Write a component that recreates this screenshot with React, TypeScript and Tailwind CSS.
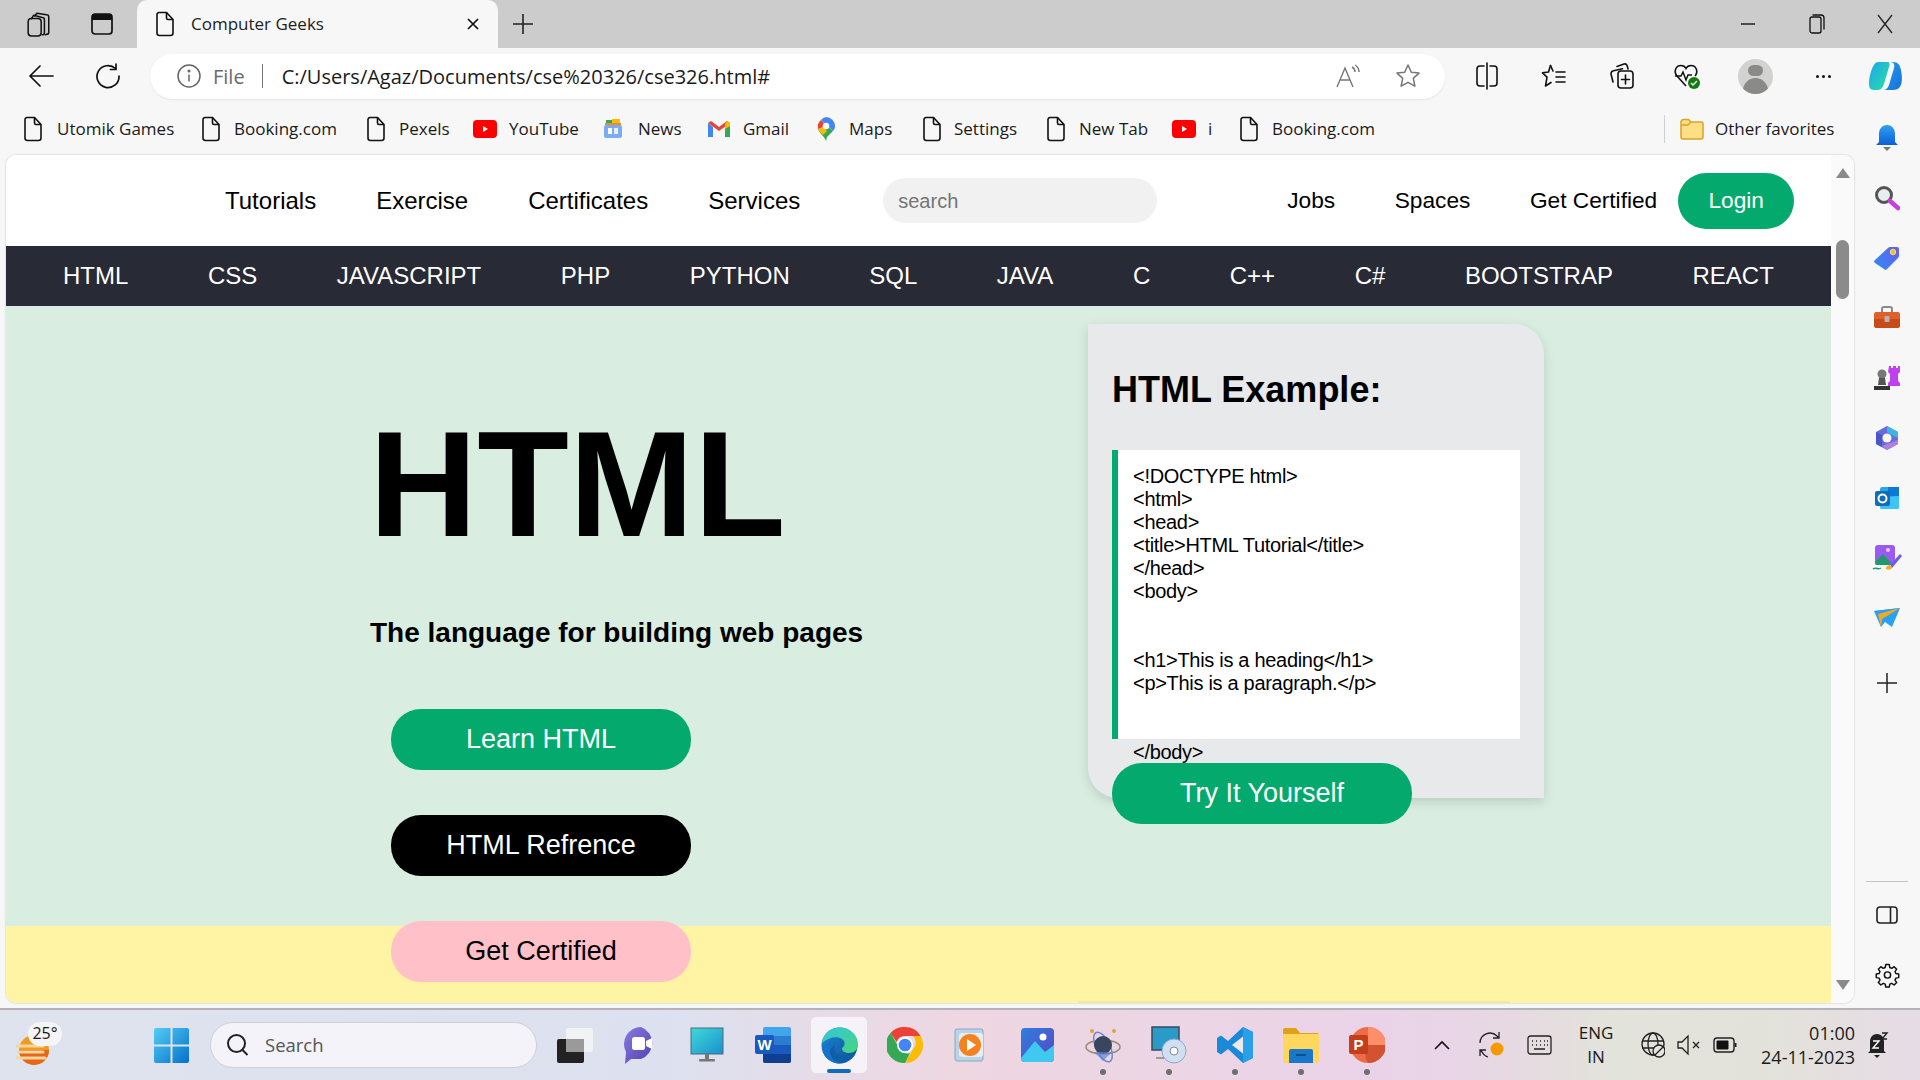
import React from "react";

const ui = "font-['Open_Sans',sans-serif]";
const web = "font-['Liberation_Sans',Arial,sans-serif]";

const Doc = ({ className = "" }: { className?: string }) => (
  <svg width="20" height="26" viewBox="0 0 20 26" fill="none" stroke="#111" strokeWidth="1.6" strokeLinejoin="round" className={className}>
    <path d="M4 1.5h7.5L18 8.5V22a2.5 2.5 0 0 1-2.5 2.5h-11A2.5 2.5 0 0 1 2 22V3.5a2 2 0 0 1 2-2z" />
    <path d="M11.5 1.5V7a1.5 1.5 0 0 0 1.5 1.5h5" />
  </svg>
);

const YouTube = () => (
  <svg width="24" height="20" viewBox="0 0 24 20">
    <rect x="0" y="1" width="24" height="18" rx="4" fill="#f00" />
    <path d="M10 7l5 3-5 3z" fill="#fff" />
  </svg>
);

const News = () => (
  <svg width="20" height="24" viewBox="0 0 20 24">
    <path d="M3 3h6v5H3z" fill="#34a853" />
    <path d="M9 2h8v6H9z" fill="#fbbc05" />
    <path d="M2 6h16v2H2z" fill="#ea8a35" />
    <rect x="1" y="8" width="18" height="13" rx="2" fill="#7baaf7" />
    <rect x="5" y="11" width="4" height="6" fill="#fff" />
    <rect x="11" y="11" width="4" height="6" fill="#e8f0fe" />
  </svg>
);

const Gmail = () => (
  <svg width="24" height="20" viewBox="0 0 24 20">
    <path d="M1 4v14h5V8z" fill="#4285f4" />
    <path d="M23 4v14h-5V8z" fill="#34a853" />
    <path d="M1 4l11 8 11-8-3-2-8 6-8-6z" fill="#ea4335" />
    <path d="M20 2l3 2v3l-5 3V5z" fill="#fbbc05" />
  </svg>
);

const MapsPin = () => (
  <svg width="20" height="26" viewBox="0 0 20 26">
    <path d="M10 1a9 9 0 0 1 9 9c0 2-1 4-2 5L5 4a9 9 0 0 1 5-3z" fill="#4285f4" />
    <path d="M5 4l6 6-9 3a9 9 0 0 1 3-9z" fill="#ea4335" />
    <path d="M2 13l9-3 6 5-6 6-1 4c-1-4-6-7-8-12z" fill="#34a853" />
    <path d="M2 13l5-2 4 4-4 4c-2-2-4-4-5-6z" fill="#fbbc05" />
    <circle cx="10" cy="10" r="3.3" fill="#fff" />
  </svg>
);

const Folder = () => (
  <svg width="24" height="24" viewBox="0 0 24 24">
    <path d="M1 5a2.5 2.5 0 0 1 2.500-2.500h5L11 5h10a2 2 0 0 1 2 2v13a2 2 0 0 1-2 2H3a2 2 0 0 1-2-2z" fill="#ffdf85" stroke="#d9a429" strokeWidth="1.500" />
    <path d="M1 8h7l3-3" fill="none" stroke="#d9a429" strokeWidth="1.500" />
  </svg>
);

const bookmarks = [
  { w: "w-[178px]", g: "gap-[14px]", i: <Doc />, t: "Utomik Games" },
  { w: "w-[165px]", g: "gap-[13px]", i: <Doc />, t: "Booking.com" },
  { w: "w-[107px]", g: "gap-[13px]", i: <Doc />, t: "Pexels" },
  { w: "w-[130px]", g: "gap-[12px]", i: <YouTube />, t: "YouTube" },
  { w: "w-[104px]", g: "gap-[15px]", i: <News />, t: "News" },
  { w: "w-[109px]", g: "gap-[12px]", i: <Gmail />, t: "Gmail" },
  { w: "w-[106px]", g: "gap-[13px]", i: <MapsPin />, t: "Maps" },
  { w: "w-[124px]", g: "gap-[12px]", i: <Doc />, t: "Settings" },
  { w: "w-[126px]", g: "gap-[13px]", i: <Doc />, t: "New Tab" },
  { w: "w-[67px]", g: "gap-[12px]", i: <YouTube />, t: "i" },
  { w: "w-[241px]", g: "gap-[13px]", i: <Doc />, t: "Booking.com" },
];

const topLeft = ["Tutorials", "Exercise", "Certificates", "Services"];
const topRight = ["Jobs", "Spaces", "Get Certified"];
const langs = ["HTML", "CSS", "JAVASCRIPT", "PHP", "PYTHON", "SQL", "JAVA", "C", "C++", "C#", "BOOTSTRAP", "REACT"];
const code1 = ["<!DOCTYPE html>", "<html>", "<head>", "<title>HTML Tutorial</title>", "</head>", "<body>", "\u00a0", "\u00a0", "<h1>This is a heading</h1>", "<p>This is a paragraph.</p>", "\u00a0", "\u00a0", "</body>"];

const line = { fill: "none", stroke: "#111", strokeWidth: 1.6, strokeLinecap: "round" as const, strokeLinejoin: "round" as const };

function TabStrip() {
  return (
    <div className="h-[48px] bg-[#cccccc] flex items-end">
      <div className="w-[78px] h-[48px] flex items-center justify-center">
        <svg width="26" height="30" viewBox="0 0 24 26" {...line} strokeWidth="1.400">
          <path d="M8 5.500l2-2.500 9 1.500a2 2 0 0 1 2 2v14a2 2 0 0 1-2 2l-1 .5" />
          <path d="M5 8l2-3 8 2a2 2 0 0 1 2 2v12a2 2 0 0 1-2 2" />
          <rect x="2" y="8" width="12" height="16" rx="3" />
        </svg>
      </div>
      <div className="w-[47px] h-[48px] flex items-center justify-center">
        <svg width="22" height="22" viewBox="0 0 22 22">
          <rect x="1" y="1" width="20" height="20" rx="3" fill="none" stroke="#111" strokeWidth="1.700" />
          <path d="M1 4a3 3 0 0 1 3-3h14a3 3 0 0 1 3 3v3H1z" fill="#111" />
        </svg>
      </div>
      <div className="ml-[12px] w-[361px] h-[48px] bg-[#f7f7f7] rounded-t-[10px] flex items-center pl-[18px]">
        <Doc />
        <span className={`${ui} ml-[16px] text-[17px] text-[#222] w-[275px]`}>Computer Geeks</span>
        <svg width="14" height="14" viewBox="0 0 14 14" stroke="#111" strokeWidth="1.700"><path d="M2 2l10 10M12 2L2 12" /></svg>
      </div>
      <div className="ml-[13px] h-[48px] flex items-center">
        <svg width="24" height="24" viewBox="0 0 24 24" stroke="#222" strokeWidth="1.600"><path d="M12 2v20M2 12h20" /></svg>
      </div>
      <div className="ml-auto h-[48px] flex items-center">
        <div className="w-[69px] flex justify-center">
          <svg width="16" height="4" viewBox="0 0 16 4" stroke="#222" strokeWidth="1.500"><path d="M1 2h14" /></svg>
        </div>
        <div className="w-[69px] flex justify-center">
          <svg width="16" height="20" viewBox="0 0 16 20" {...line} strokeWidth="1.300"><rect x="1" y="3" width="11" height="16" rx="2" /><path d="M4 1h8a3 3 0 0 1 3 3v11" /></svg>
        </div>
        <div className="w-[69px] flex justify-center pr-[2px]">
          <svg width="16" height="20" viewBox="0 0 16 20" stroke="#222" strokeWidth="1.300"><path d="M1 1l14 18M15 1L1 19" /></svg>
        </div>
      </div>
    </div>
  );
}

function Toolbar() {
  return (
    <div className="h-[56px] bg-[#f7f7f7] flex items-center pl-[8px]">
      <div className="w-[66px] flex justify-center">
        <svg width="26" height="24" viewBox="0 0 26 24" {...line} strokeWidth="1.700"><path d="M25 12H2M12 2L2 12l10 10" /></svg>
      </div>
      <div className="w-[67px] flex justify-center">
        <svg width="26" height="26" viewBox="0 0 26 26" {...line} strokeWidth="1.700"><path d="M20.500 5.500A11 11 0 1 0 24 13" /><path d="M21 1v5.500h-5.500" /></svg>
      </div>
      <div className="ml-[9px] w-[1295px] h-[45px] bg-white rounded-full shadow-[0_1px_2px_rgba(0,0,0,0.08)] flex items-center pl-[27px] pr-[24px]">
        <svg width="24" height="24" viewBox="0 0 24 24" fill="none" stroke="#666" strokeWidth="1.500">
          <circle cx="12" cy="12" r="11" />
          <path d="M12 10.500v7" />
          <circle cx="12" cy="7" r=".8" fill="#666" />
        </svg>
        <span className={`${ui} ml-[12px] pt-[1px] text-[20px] text-[#6b6b6b]`}>File</span>
        <span className="ml-[17px] w-[1px] h-[24px] bg-[#777]" />
        <span className={`${ui} ml-[19px] pt-[1px] text-[20px] text-[#1a1a1a]`}>C:/Users/Agaz/Documents/cse%20326/cse326.html#</span>
        <div className="ml-auto flex items-center gap-[33px]">
          <svg width="27" height="26" viewBox="0 0 27 26" fill="none" stroke="#777" strokeWidth="1.400"><path d="M2 24L10 5l8 19M5 17h10" /><path d="M17 4c2 1 3 3 3 5M20 2c2.500 1.500 4 4 4 7" /></svg>
          <svg width="26" height="26" viewBox="0 0 26 26" fill="none" stroke="#777" strokeWidth="1.500" strokeLinejoin="round"><path d="M13 2l3.300 7.200 7.700.9-5.700 5.300 1.600 7.800L13 19.300 6.100 23.200l1.600-7.800L2 10.100l7.700-.9z" /></svg>
        </div>
      </div>
      <div className="ml-[9px] w-[66px] flex justify-center">
        <svg width="24" height="28" viewBox="0 0 24 28" {...line}><path d="M12 1v26" /><path d="M9 4H5a3 3 0 0 0-3 3v14a3 3 0 0 0 3 3h4M15 4h4a3 3 0 0 1 3 3v14a3 3 0 0 1-3 3h-4" /></svg>
      </div>
      <div className="w-[68px] flex justify-center">
        <svg width="26" height="26" viewBox="0 0 26 26" {...line}><path d="M9.500 2.500L7.500 9l-6 .8 4.500 4.300L4.500 23l5.500-3.500" /><path d="M9.500 2.500L12 8" /><path d="M15 9h9M15 14h9M15 19h9" /></svg>
      </div>
      <div className="w-[68px] flex justify-center">
        <svg width="26" height="28" viewBox="0 0 26 28" {...line}><path d="M4 20l-2-8c0-1.500 1-3 2.500-3.300l9-2M8 4.500l7-2.500c1.500-.3 2.700.5 3.200 1.800l.8 3.200" /><rect x="9" y="9" width="15" height="17" rx="3" /><path d="M16.500 13v9M12.500 17.500h8" /></svg>
      </div>
      <div className="w-[62px] flex justify-center">
        <svg width="28" height="28" viewBox="0 0 28 28" fill="none">
          <path d="M13 24L4 14C.5 10 2.500 3.500 8 3.500c2.500 0 4 1 5 3 1-2 2.500-3 5-3 5.500 0 7.500 6.500 4 10.500" stroke="#111" strokeWidth="1.600" />
          <path d="M2 14h6l2-4 3 8 2-5h4" stroke="#111" strokeWidth="1.500" />
          <circle cx="21" cy="21" r="6" fill="#107c10" />
          <path d="M18 21l2 2 4-4" stroke="#fff" strokeWidth="1.400" />
        </svg>
      </div>
      <div className="w-[74px] flex justify-center">
        <div className="w-[35px] h-[35px] rounded-full bg-[#d2d2d0] overflow-hidden flex flex-col items-center">
          <div className="mt-[6px] w-[15px] h-[15px] rounded-full bg-[#8a8a88]" />
          <div className="mt-[2px] w-[25px] h-[20px] rounded-t-full bg-[#8a8a88]" />
        </div>
      </div>
      <div className="w-[62px] flex justify-center gap-[3px]">
        <span className="w-[3px] h-[3px] rounded-full bg-[#111]" />
        <span className="w-[3px] h-[3px] rounded-full bg-[#111]" />
        <span className="w-[3px] h-[3px] rounded-full bg-[#111]" />
      </div>
      <div className="w-[64px] flex justify-center">
        <svg width="36" height="32" viewBox="0 0 36 32">
          <defs>
            <linearGradient id="cp1" x1="0" y1="0" x2="1" y2="1"><stop offset="0" stopColor="#19a8ee" /><stop offset="1" stopColor="#2de0a0" /></linearGradient>
            <linearGradient id="cp2" x1="0" y1="0" x2="1" y2="1"><stop offset="0" stopColor="#1fa0e8" /><stop offset="1" stopColor="#1a6fe0" /></linearGradient>
          </defs>
          <path d="M10 2h9c3 0 3 2 2 5l-5 17c-1 3-3 6-6 6H6c-4 0-5-3-5-6 0-8 4-22 9-22z" fill="url(#cp1)" />
          <path d="M22 2h3c5 0 7 3 8 8 1 6 2 14-2 18-2 2-6 2-9 2h-7c3 0 5-2 6-5l5-17c1-3 0-6-4-6z" fill="url(#cp2)" />
        </svg>
      </div>
    </div>
  );
}

function Bookmarks() {
  return (
    <div className="h-[51px] shrink-0 flex items-center pl-[23px] pb-[2px]">
      {bookmarks.map((b, i) => (
        <div key={i} className={`${b.w} ${b.g} shrink-0 flex items-center`}>
          {b.i}
          <span className={`${ui} text-[17px] text-[#1a1a1a] whitespace-nowrap`}>{b.t}</span>
        </div>
      ))}
      <span className="ml-[184px] w-[1px] h-[28px] bg-[#d0d0d0]" />
      <div className="ml-[15px] flex items-center gap-[11px]">
        <Folder />
        <span className={`${ui} text-[17px] text-[#1a1a1a] whitespace-nowrap`}>Other favorites</span>
      </div>
    </div>
  );
}

function TopNav() {
  return (
    <div className={`${web} h-[91px] bg-white flex items-center pl-[219px] text-[24px] text-black`}>
      <div className="flex gap-[60px]">
        {topLeft.map((t) => <span key={t}>{t}</span>)}
      </div>
      <div className="ml-[83px] w-[274px] h-[45px] rounded-full bg-[#f1f1f1] flex items-center pl-[15px] text-[20px] text-[#757575]">search</div>
      <div className="ml-[130px] flex gap-[59.500px] text-[22.700px]">
        {topRight.map((t) => <span key={t}>{t}</span>)}
      </div>
      <div className="ml-[21px] w-[116px] h-[56px] rounded-[28px] bg-[#04aa6d] text-white text-[22.700px] flex items-center justify-center">Login</div>
    </div>
  );
}

function LangNav() {
  return (
    <div className={`${web} h-[60px] bg-[#282a35] flex items-center pl-[57px] gap-[79.550px] text-[24px] text-white`}>
      {langs.map((t) => <span key={t}>{t}</span>)}
    </div>
  );
}

const btn = "w-[300px] h-[61px] rounded-[30px] flex items-center justify-center text-[27px]";

function Hero() {
  return (
    <div className={`${web} relative z-10 h-[620px] bg-[#d9eee1] flex text-black`}>
      <div className="w-[1082px] shrink-0 pl-[363px] pt-[92px]">
        <h1 className="text-[150px] leading-[172px] font-bold">HTML</h1>
        <p className="ml-[1px] mt-[47px] text-[28px] leading-[32px] font-bold whitespace-nowrap">The language for building web pages</p>
        <div className="ml-[22px] mt-[60px] flex flex-col gap-[45px]">
          <div className={`${btn} bg-[#04aa6d] text-white`}>Learn HTML</div>
          <div className={`${btn} bg-black text-white`}>HTML Refrence</div>
          <div className={`${btn} bg-[#ffc0c7] text-black`}>Get Certified</div>
        </div>
      </div>
      <div className="mt-[18px] w-[456px] h-[474px] bg-[#e7e9eb] rounded-tr-[30px] rounded-bl-[30px] shadow-[0_4px_12px_rgba(0,0,0,0.14)] px-[24px] pt-[45px]">
        <h2 className="text-[36px] leading-[41px] font-bold">HTML Example:</h2>
        <div className="mt-[40px] h-[289px] bg-white border-l-[6px] border-[#04aa6d] pl-[15px] pt-[15px] text-[20px] leading-[23px] tracking-[-0.3px]">
          {code1.map((c, i) => <div key={i}>{c}</div>)}
        </div>
        <div className={`${btn} mt-[24px] bg-[#04aa6d] text-white`}>Try It Yourself</div>
      </div>
    </div>
  );
}

function Scrollbar() {
  return (
    <div className="w-[23px] shrink-0 bg-[#fafafa] flex flex-col items-center pt-[13px] pb-[13px]">
      <div className="w-0 h-0 border-x-[7px] border-x-transparent border-b-[10px] border-b-[#8a8a8a]" />
      <div className="mt-[62px] w-[13px] h-[59px] rounded-full bg-[#8b8b8b]" />
      <div className="mt-auto w-0 h-0 border-x-[7px] border-x-transparent border-t-[10px] border-t-[#8a8a8a]" />
    </div>
  );
}

function Page() {
  return (
    <div className="ml-[6px] w-[1848px] h-[848px] rounded-[10px] overflow-hidden bg-white flex shadow-[0_0_2px_rgba(0,0,0,0.25)]">
      <div className="flex-1 min-w-0 flex flex-col">
        <TopNav />
        <LangNav />
        <Hero />
        <div className="h-[77px] bg-[#fff4a3] pt-[75px] pl-[1072px]">
          <div className="w-[432px] h-[2px] bg-[#f3e89d]" />
        </div>
      </div>
      <Scrollbar />
    </div>
  );
}

const SideSlot = ({ children }: { children: React.ReactNode }) => (
  <div className="h-[60px] flex items-center justify-center">{children}</div>
);

function Sidebar() {
  return (
    <div className="w-[66px] shrink-0 flex flex-col pt-[4px] pb-[3px]">
      <SideSlot>
        <svg width="24" height="28" viewBox="0 0 24 28">
          <defs><linearGradient id="bell" x1="0" y1="0" x2="0" y2="1"><stop offset="0" stopColor="#2ea0f0" /><stop offset="1" stopColor="#0c5fd8" /></linearGradient></defs>
          <path d="M12 1c5 0 8 4 8 9v8l3 3H1l3-3v-8c0-5 3-9 8-9z" fill="url(#bell)" />
          <path d="M8 23h8l-4 4z" fill="#777" />
        </svg>
      </SideSlot>
      <SideSlot>
        <svg width="26" height="26" viewBox="0 0 26 26" fill="none">
          <circle cx="10" cy="10" r="7.500" fill="#e8eef0" stroke="#555" strokeWidth="3" />
          <path d="M16 16l8 7" stroke="#c83fe0" strokeWidth="4.500" strokeLinecap="round" />
        </svg>
      </SideSlot>
      <SideSlot>
        <svg width="26" height="24" viewBox="0 0 26 24">
          <defs><linearGradient id="tag" x1="0" y1="1" x2="1" y2="0"><stop offset="0" stopColor="#2d8cf0" /><stop offset="1" stopColor="#6a5cf0" /></linearGradient></defs>
          <path d="M1 14L14 2a3 3 0 0 1 2-1h7a2 2 0 0 1 2 2v7a3 3 0 0 1-1 2L13 23a2 2 0 0 1-3 0l-9-6a2 2 0 0 1 0-3z" fill="url(#tag)" />
          <circle cx="19" cy="6" r="2.700" fill="#f0c020" stroke="#f5e080" />
        </svg>
      </SideSlot>
      <SideSlot>
        <svg width="28" height="24" viewBox="0 0 28 24">
          <path d="M9 6V3a2 2 0 0 1 2-2h6a2 2 0 0 1 2 2v3" fill="none" stroke="#888" strokeWidth="2" />
          <path d="M1 8a2 2 0 0 1 2-2h22a2 2 0 0 1 2 2v5H1z" fill="#e0602a" />
          <path d="M1 13h26v7a2 2 0 0 1-2 2H3a2 2 0 0 1-2-2z" fill="#c74a18" />
          <rect x="11.500" y="10" width="5" height="6" rx="1" fill="#b5b5b5" />
        </svg>
      </SideSlot>
      <SideSlot>
        <svg width="28" height="26" viewBox="0 0 28 26">
          <path d="M16 1h2v2h2V1h3v2h2V1h2v6l-2 2v7l2 2v3H15v-3l2-2V9l-2-2z" fill="#c040f0" />
          <circle cx="9" cy="9" r="4.500" fill="#777" />
          <path d="M6 13h6l1 7H5z" fill="#555" />
          <path d="M1 21h16v4H1z" fill="#333" />
        </svg>
      </SideSlot>
      <SideSlot>
        <svg width="26" height="26" viewBox="0 0 26 26" fill="none">
          <path d="M13 1L24 7v12l-11 6L2 19V7z" fill="#6a6ad8" />
          <path d="M13 1L24 7v6l-6-3-5-3z" fill="#38b6e8" />
          <path d="M2 7v12l6 3V10z" fill="#4a55c8" />
          <path d="M8 21l5 4 11-6v-4z" fill="#b080e0" />
          <circle cx="13" cy="13" r="4.500" fill="#f7f7f7" />
        </svg>
      </SideSlot>
      <SideSlot>
        <svg width="26" height="24" viewBox="0 0 26 24">
          <rect x="6" y="1" width="19" height="22" rx="2" fill="#28a8ea" />
          <path d="M14 1h11v9H14z" fill="#0f78d4" />
          <path d="M6 12l19-2v13H8a2 2 0 0 1-2-2z" fill="#50d9ff" opacity=".55" />
          <rect x="1" y="5" width="15" height="15" rx="2" fill="#0f6cbd" />
          <circle cx="8.500" cy="12.500" r="4" fill="none" stroke="#fff" strokeWidth="2" />
        </svg>
      </SideSlot>
      <SideSlot>
        <svg width="30" height="28" viewBox="0 0 30 28">
          <rect x="3" y="1" width="20" height="20" rx="3" fill="#9a5cf0" />
          <path d="M3 18l8-8 8 9-2 2H5a2 2 0 0 1-2-2z" fill="#1f9a6a" />
          <circle cx="16" cy="6" r="2" fill="#f0c8f8" />
          <path d="M17 22l11-12 2 2-10 12z" fill="#6a5cf0" />
          <path d="M14 25c0-3 2-4 5-4l1 3c-1 2-4 2-6 1z" fill="#f0b020" />
          <path d="M1 25c3-2 5 1 8-1" stroke="#1f9a6a" strokeWidth="1.500" fill="none" />
        </svg>
      </SideSlot>
      <SideSlot>
        <svg width="28" height="20" viewBox="0 0 28 20">
          <path d="M1 3l26-3-8 19-7-5-4 5z" fill="#2aa0f0" />
          <path d="M1 3l26-3L8 9z" fill="#2aa0f0" />
          <path d="M5 6l22-6L9 11l-1 8z" fill="#f5a623" />
        </svg>
      </SideSlot>
      <div className="mt-[5px]">
        <SideSlot>
          <svg width="20" height="20" viewBox="0 0 20 20" stroke="#222" strokeWidth="1.500"><path d="M10 0v20M0 10h20" /></svg>
        </SideSlot>
      </div>
      <div className="mt-auto mx-[12px] h-[1px] bg-[#c4c4c4] mb-[3px]" />
      <SideSlot>
        <svg width="22" height="18" viewBox="0 0 22 18" fill="none" stroke="#222" strokeWidth="1.600"><rect x="1" y="1" width="20" height="16" rx="3" /><path d="M14.500 1v16" /></svg>
      </SideSlot>
      <SideSlot>
        <svg width="25" height="26" viewBox="0 0 24 24" {...line} strokeWidth="1.400">
          <path d="M10.300 2h3.400l.5 2.800 1.900.8 2.300-1.600 2.400 2.400-1.600 2.300.8 1.900 2.800.5v3.400l-2.800.5-.8 1.900 1.600 2.300-2.400 2.400-2.300-1.600-1.900.8-.5 2.800h-3.400l-.5-2.800-1.900-.8-2.300 1.600-2.400-2.400 1.600-2.300-.8-1.900-2.800-.5v-3.400l2.800-.5.800-1.900-1.600-2.300 2.400-2.400 2.300 1.600 1.900-.8z" />
          <circle cx="12" cy="12" r="3" />
        </svg>
      </SideSlot>
    </div>
  );
}

const Slot = ({ children, dot, active }: { children: React.ReactNode; dot?: boolean; active?: boolean }) => (
  <div className="w-[66px] h-[71px] flex items-center justify-center relative shrink-0">
    {active && <div className="absolute left-[5px] top-[7px] w-[56px] h-[56px] rounded-[5px] bg-[#f5f3f7]" />}
    <div className="relative">{children}</div>
    {active && <div className="absolute left-[21px] top-[59px] w-[24px] h-[4px] rounded-full bg-[#0f6cbd]" />}
    {dot && <div className="absolute left-[30px] top-[59px] w-[6px] h-[6px] rounded-full bg-[#6e6e6e]" />}
  </div>
);

function Taskbar() {
  return (
    <div className={`${ui} h-[72px] border-t-[2px] border-[#b5b1b8] bg-[linear-gradient(90deg,#dfe3ee_0%,#dde1ef_35%,#eed7e1_50%,#ead3e8_72%,#e8d5e6_76%,#e2e3da_84%,#e3e2da_92%,#e6dce6_100%)] flex items-center text-[#1a1a1a]`}>
      <div className="w-[154px] h-full shrink-0 pl-[16px] pt-[12px] flex">
        <div className="relative w-[46px] h-[46px]">
          <svg width="34" height="40" viewBox="0 0 34 40" className="absolute left-0 top-[8px]">
            <circle cx="18" cy="20" r="15" fill="#f39a1e" />
            <path d="M18 35a15 15 0 0 0 15-15H3a15 15 0 0 0 15 15z" fill="#e8651a" />
            <path d="M1 16h26M3 22h24M1 28h28" stroke="#f1d7a0" strokeWidth="3" strokeLinecap="round" />
          </svg>
          <div className="absolute left-[12px] top-0 w-[34px] h-[24px] rounded-full bg-[#f5f5f8] text-[16px] leading-[22px] text-center">25°</div>
        </div>
      </div>
      <svg width="35" height="35" viewBox="0 0 35 35" className="shrink-0">
        <defs><linearGradient id="win" x1="0" y1="0" x2="1" y2="1"><stop offset="0" stopColor="#52cdf7" /><stop offset="1" stopColor="#0670c9" /></linearGradient></defs>
        <path d="M0 2a2 2 0 0 1 2-2h14.500v16.500H0zM18.500 0H33a2 2 0 0 1 2 2v14.500H18.500zM0 18.500h16.500V35H2a2 2 0 0 1-2-2zM18.500 18.500H35V33a2 2 0 0 1-2 2H18.500z" fill="url(#win)" />
      </svg>
      <div className="ml-[21px] w-[327px] h-[46px] rounded-full bg-[#f3f3f9] border-[1.500px] border-[#cfcfd9] flex items-center pl-[15px] shrink-0">
        <svg width="24" height="24" viewBox="0 0 24 24" fill="none" stroke="#222" strokeWidth="2"><circle cx="10.500" cy="10.500" r="8.500" /><path d="M16.500 17l5 5" /></svg>
        <span className="ml-[15px] text-[18.500px] text-[#555]">Search</span>
      </div>
      <div className="ml-[5px] flex">
        <Slot>
          <svg width="36" height="36" viewBox="0 0 36 36">
            <rect x="0" y="12" width="27" height="24" rx="2" fill="#222" />
            <rect x="9" y="1" width="27" height="24" rx="2" fill="#f4f4f4" opacity=".85" />
            <rect x="9" y="12" width="18" height="13" fill="#9a9a9a" />
          </svg>
        </Slot>
        <Slot>
          <svg width="34" height="38" viewBox="0 0 34 38">
            <defs><linearGradient id="chat" x1="0" y1="0" x2="1" y2="1"><stop offset="0" stopColor="#8a7be0" /><stop offset="1" stopColor="#4f3fb0" /></linearGradient></defs>
            <path d="M17 1a17 17 0 0 1 0 32H7l-6 5 1-12A17 17 0 0 1 17 1z" fill="url(#chat)" />
            <rect x="8" y="11" width="13" height="13" rx="2.500" fill="#fff" />
            <path d="M22 15l6-3v11l-6-3z" fill="#fff" />
          </svg>
        </Slot>
        <Slot>
          <svg width="34" height="36" viewBox="0 0 34 36">
            <defs><linearGradient id="mon" x1="0" y1="0" x2="1" y2="1"><stop offset="0" stopColor="#3fdad8" /><stop offset="1" stopColor="#1a8fd0" /></linearGradient></defs>
            <rect x="1" y="1" width="32" height="26" fill="url(#mon)" stroke="#4a6a78" />
            <rect x="15" y="27" width="4" height="5" fill="#777" />
            <rect x="9" y="32" width="16" height="2.500" rx="1" fill="#777" />
          </svg>
        </Slot>
        <Slot>
          <svg width="36" height="36" viewBox="0 0 36 36">
            <rect x="8" y="0" width="28" height="36" rx="2" fill="#41a5ee" />
            <rect x="8" y="9" width="28" height="9" fill="#2b7cd3" />
            <rect x="8" y="18" width="28" height="9" fill="#185abd" />
            <path d="M8 27h28v7a2 2 0 0 1-2 2H10a2 2 0 0 1-2-2z" fill="#103f91" />
            <rect x="0" y="8" width="19" height="19" rx="2" fill="#185abd" />
            <text x="9.500" y="23" fontFamily="'Liberation Sans',sans-serif" fontWeight="bold" fontSize="15" fill="#fff" textAnchor="middle">W</text>
          </svg>
        </Slot>
        <Slot active>
          <svg width="37" height="37" viewBox="0 0 37 37">
            <defs>
              <linearGradient id="e1" x1="0" y1="0" x2="1" y2="1"><stop offset="0" stopColor="#33c6d8" /><stop offset="1" stopColor="#47d67f" /></linearGradient>
              <linearGradient id="e2" x1="0" y1="0" x2="1" y2="1"><stop offset="0" stopColor="#1e88d8" /><stop offset="1" stopColor="#0c4d92" /></linearGradient>
            </defs>
            <circle cx="18.500" cy="18.500" r="18" fill="url(#e2)" />
            <path d="M1 16C2 7 9 .5 18.500.5 29 .5 37 8 37 17c0 6-4 9-9 9-4 0-7-2-7-4 0-1 1-2 2-3 1-2 1-5-2-7-5-3-13-2-20 4z" fill="url(#e1)" />
            <path d="M14 12c-5 3-7 10-4 16 2 4 6 7 12 8-8 2-18-3-20-12-1-5 4-10 12-12z" fill="#1773c8" />
            <path d="M14 18c-2 6 2 11 8 11 5 0 9-1 12-3-3 6-9 10-15 10-5-1-8-4-9-8-2-5 0-8 4-10z" fill="#0f5ea8" />
          </svg>
        </Slot>
        <Slot>
          <svg width="36" height="36" viewBox="0 0 36 36">
            <path d="M18 0a18 18 0 0 1 15.600 9H18a9 9 0 0 0-8.500 6L3.500 6A18 18 0 0 1 18 0z" fill="#ea4335" />
            <path d="M33.600 9A18 18 0 0 1 18 36l7.800-13.500A9 9 0 0 0 25.800 9z" fill="#fbbc05" />
            <path d="M18 36A18 18 0 0 1 3.500 6l7.800 13.500A9 9 0 0 0 23 26z" fill="#34a853" />
            <circle cx="18" cy="18" r="8" fill="#fff" />
            <circle cx="18" cy="18" r="6.300" fill="#4285f4" />
          </svg>
        </Slot>
        <Slot>
          <svg width="34" height="34" viewBox="0 0 34 34">
            <rect x="1" y="1" width="28" height="32" rx="2" fill="#b8d4ea" stroke="#8aa8c0" />
            <rect x="5" y="5" width="24" height="24" rx="3" fill="#e6eef5" />
            <circle cx="16" cy="17" r="11" fill="#f5821f" />
            <path d="M13 11l9 6-9 6z" fill="#fff" />
          </svg>
        </Slot>
        <Slot>
          <svg width="33" height="34" viewBox="0 0 33 34">
            <defs><linearGradient id="ph" x1="0" y1="0" x2="1" y2="1"><stop offset="0" stopColor="#2d7fe0" /><stop offset="1" stopColor="#5a46c0" /></linearGradient></defs>
            <rect width="33" height="34" rx="4" fill="url(#ph)" />
            <path d="M0 30l14-17 10 11 9-7v13a4 4 0 0 1-4 4H4a4 4 0 0 1-4-4z" fill="#3fc8f0" />
            <circle cx="22" cy="9" r="3.500" fill="#fff" />
          </svg>
        </Slot>
        <Slot dot>
          <svg width="38" height="36" viewBox="0 0 38 36" fill="none">
            <ellipse cx="19" cy="20" rx="17" ry="7" stroke="#9a8a70" strokeWidth="1.500" />
            <ellipse cx="19" cy="20" rx="7" ry="16" stroke="#7088d0" strokeWidth="1.500" transform="rotate(-25 19 20)" />
            <circle cx="19" cy="18" r="9" fill="#3a4560" />
            <path d="M10 25l9 9 9-9z" fill="#5a80d8" opacity=".65" />
            <circle cx="8" cy="4" r="2" fill="#d8a830" />
            <circle cx="30" cy="4" r="2" fill="#d8a830" />
          </svg>
        </Slot>
        <Slot dot>
          <svg width="36" height="38" viewBox="0 0 36 38">
            <rect x="1" y="1" width="27" height="23" fill="#2a9ac8" stroke="#3a4a55" strokeWidth="1.500" />
            <path d="M14 28h4v3h-4zM5 31h20v2H5z" fill="#9a9a9a" />
            <circle cx="23" cy="25" r="12" fill="#d0e0f0" stroke="#8aa8d0" />
            <circle cx="23" cy="25" r="4" fill="#fff" stroke="#7a8a9a" />
          </svg>
        </Slot>
        <Slot dot>
          <svg width="36" height="36" viewBox="0 0 36 36">
            <path d="M26 0l10 5v26l-10 5-15-14-7 5.500L0 25V11l4-2.500L11 14z" fill="#1a8ad8" />
            <path d="M26 9.500L15 18l11 8.500z" fill="#f0e8f0" />
            <path d="M26 0l10 5v26l-10 5z" fill="#2aa0e8" />
          </svg>
        </Slot>
        <Slot dot>
          <svg width="36" height="36" viewBox="0 0 36 36">
            <path d="M0 3a2 2 0 0 1 2-2h11l4 5h17a2 2 0 0 1 2 2v4H0z" fill="#e0a018" />
            <path d="M0 7h36v27a2 2 0 0 1-2 2H2a2 2 0 0 1-2-2z" fill="#ffd75e" />
            <path d="M6 24a2 2 0 0 1 2-2h20a2 2 0 0 1 2 2v12H6z" fill="#1a78c8" />
            <path d="M13 27h10v2H13z" fill="#0f4f90" />
          </svg>
        </Slot>
        <Slot dot>
          <svg width="36" height="36" viewBox="0 0 36 36">
            <circle cx="19" cy="18" r="18" fill="#ed6c47" />
            <path d="M19 0a18 18 0 0 1 18 18H19z" fill="#ff8f6b" />
            <path d="M19 36a18 18 0 0 1 0-18h18a18 18 0 0 1-18 18z" fill="#d35230" />
            <rect x="0" y="8" width="19" height="19" rx="2" fill="#c43e1c" />
            <text x="9.500" y="23" fontFamily="'Liberation Sans',sans-serif" fontWeight="bold" fontSize="15" fill="#fff" textAnchor="middle">P</text>
          </svg>
        </Slot>
      </div>
      <div className="ml-[33px] w-[18px] flex justify-center shrink-0">
        <svg width="16" height="10" viewBox="0 0 16 10" fill="none" stroke="#111" strokeWidth="1.600"><path d="M1 9l7-7 7 7" /></svg>
      </div>
      <div className="ml-[27px] shrink-0">
        <svg width="26" height="30" viewBox="0 0 26 30" fill="none" stroke="#222" strokeWidth="1.300">
          <path d="M2 13a10 10 0 0 1 17-7l2 2M21 2v6h-6" />
          <path d="M10 27A10 10 0 0 1 4 22l-2-2M2 26v-6h6" />
          <circle cx="19" cy="19" r="6.500" fill="#f49a00" stroke="none" />
        </svg>
      </div>
      <div className="ml-[23px] shrink-0">
        <svg width="25" height="20" viewBox="0 0 25 20" fill="none" stroke="#222" strokeWidth="1.300">
          <rect x="1" y="1" width="23" height="18" rx="2.500" />
          <path d="M5 6h1M9 6h1M13 6h1M17 6h1M21 6h-1M5 10h1M9 10h1M13 10h1M17 10h1M21 10h-1M7 14h11" strokeWidth="1.600" />
        </svg>
      </div>
      <div className="ml-[23px] w-[42px] text-center text-[17px] leading-[24px] shrink-0">ENG<br />IN</div>
      <div className="ml-[24px] shrink-0">
        <svg width="24" height="26" viewBox="0 0 24 26" fill="none" stroke="#222" strokeWidth="1.300">
          <circle cx="12" cy="12" r="11" />
          <ellipse cx="12" cy="12" rx="5" ry="11" />
          <path d="M1 9h22M1 16h22" />
          <circle cx="18" cy="19" r="6" fill="#e8e2e0" />
          <path d="M14 23l8-8" />
        </svg>
      </div>
      <div className="ml-[12px] shrink-0">
        <svg width="24" height="22" viewBox="0 0 24 22" fill="none" stroke="#222" strokeWidth="1.300">
          <path d="M1 8h4l6-6v18l-6-6H1z" />
          <path d="M16 8l6 6M22 8l-6 6" />
        </svg>
      </div>
      <div className="ml-[12px] shrink-0">
        <svg width="24" height="16" viewBox="0 0 24 16">
          <rect x="1" y="1" width="20" height="14" rx="3" fill="none" stroke="#222" strokeWidth="1.400" />
          <rect x="3.500" y="3.500" width="12" height="9" rx="1" fill="#111" />
          <rect x="21.500" y="6" width="2" height="4" fill="#222" />
        </svg>
      </div>
      <div className="ml-[8px] w-[110px] text-right text-[18px] leading-[24px] whitespace-nowrap shrink-0">01:00<br />24-11-2023</div>
      <div className="ml-[12px] shrink-0">
        <svg width="22" height="28" viewBox="0 0 22 28">
          <path d="M10 3c5 0 7 4 7 8v9l2 2H1l2-2v-9c0-4 2-8 7-8z" fill="#222" />
          <path d="M7 24h6l-3 3z" fill="#222" />
          <path d="M6 10h6l-6 7h6" stroke="#fff" strokeWidth="1.400" fill="none" />
          <path d="M15 2h5l-5 6h5" stroke="#222" strokeWidth="1.400" fill="none" />
        </svg>
      </div>
    </div>
  );
}

export default function App() {
  return (
    <div className="w-[1920px] h-[1080px] overflow-hidden bg-[#f7f7f7] flex flex-col">
      <TabStrip />
      <Toolbar />
      <div className="flex h-[904px]">
        <div className="flex-1 min-w-0">
          <Bookmarks />
          <Page />
        </div>
        <Sidebar />
      </div>
      <Taskbar />
    </div>
  );
}
